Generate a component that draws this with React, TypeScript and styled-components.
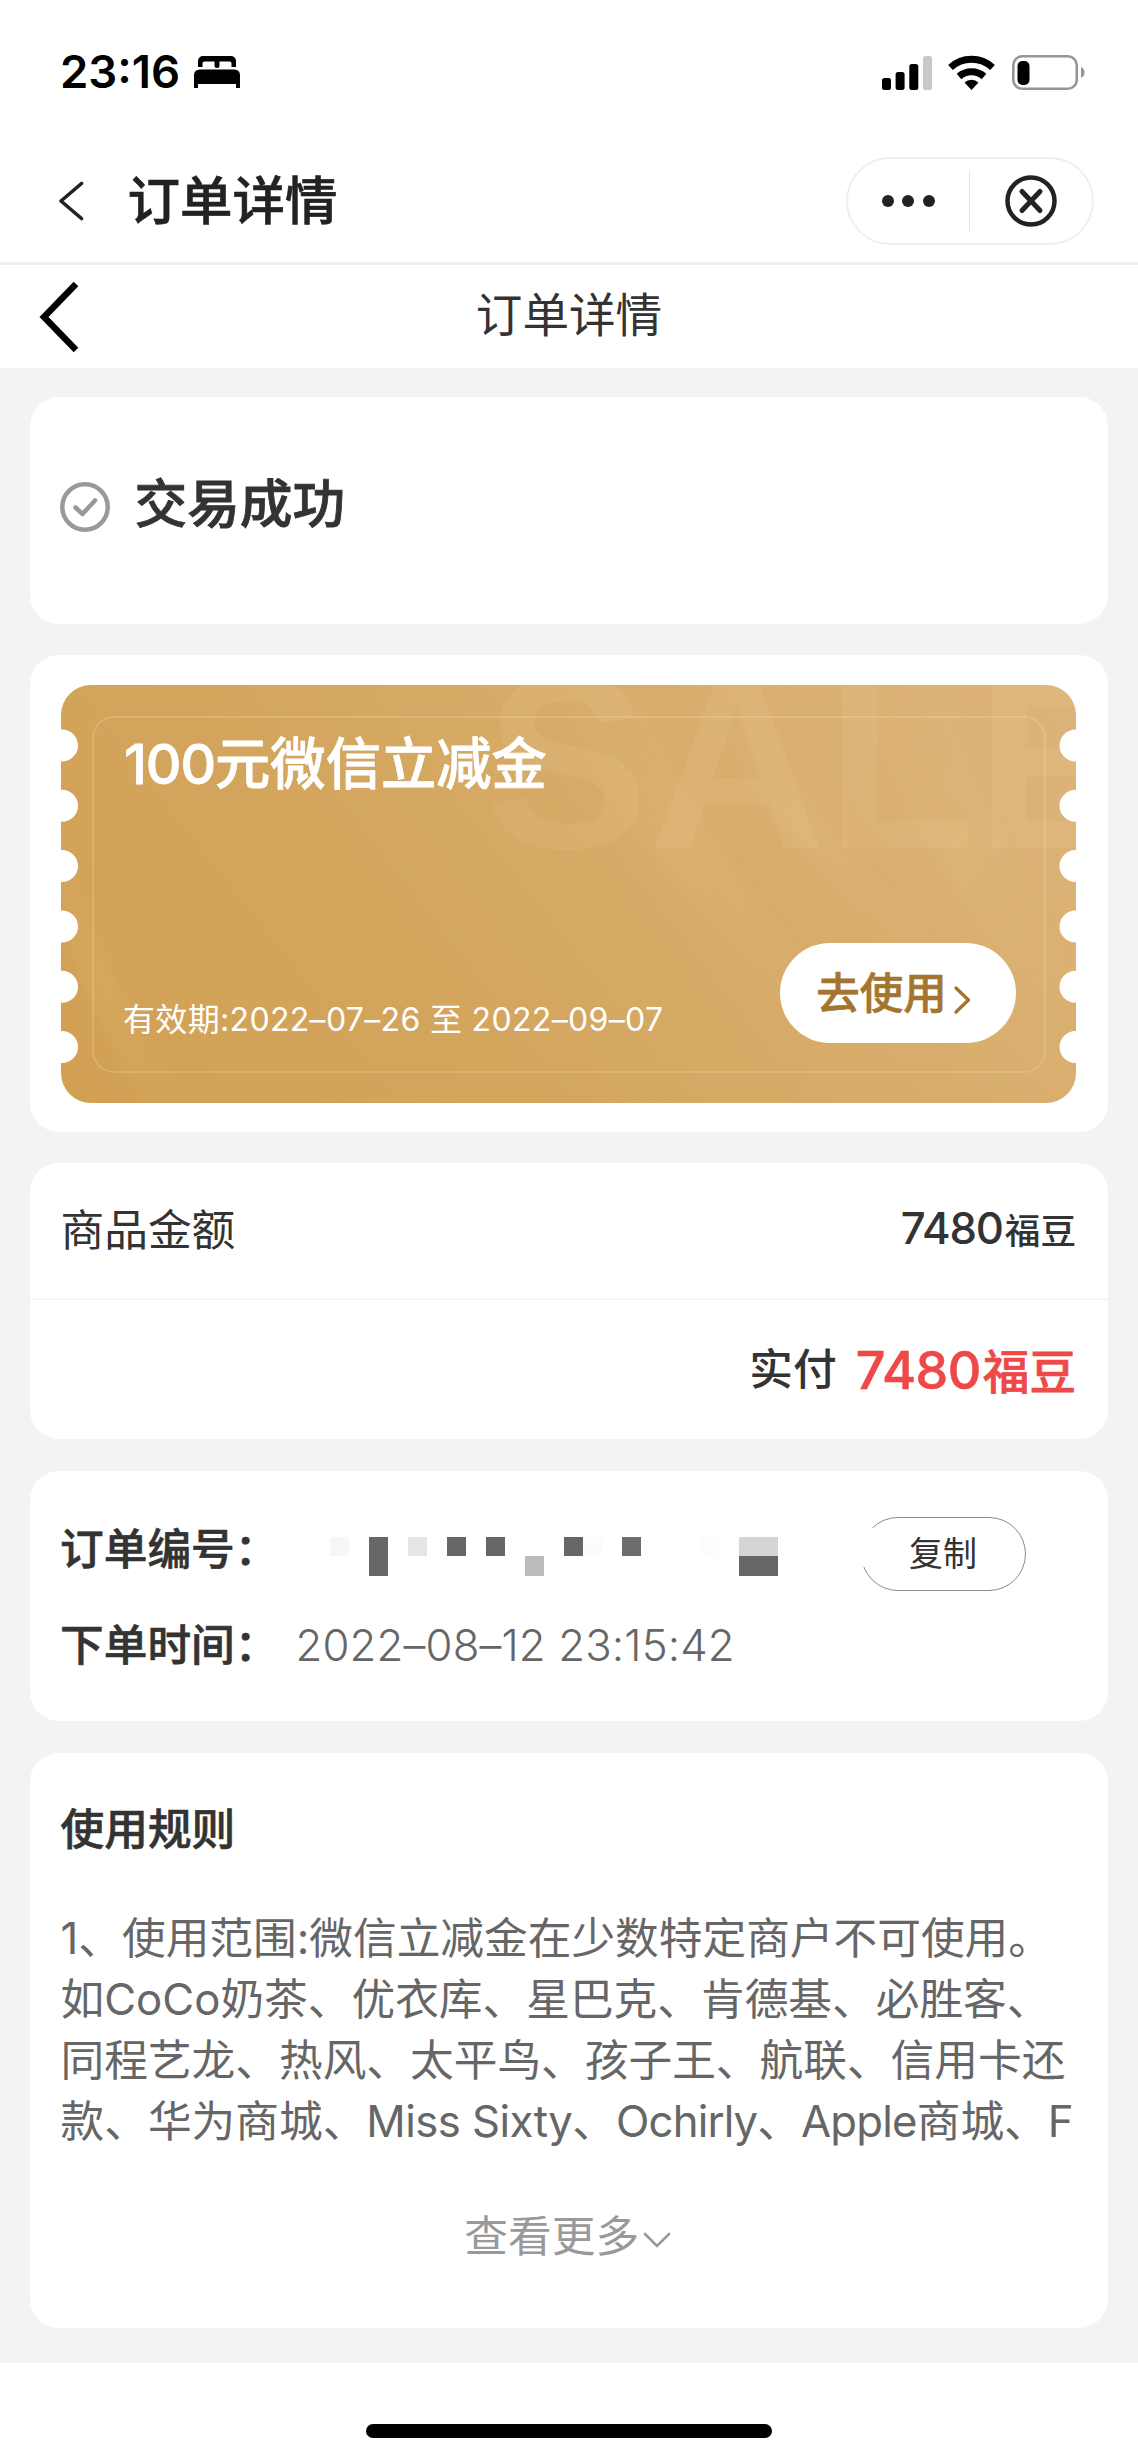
import React from "react";
import styled, { createGlobalStyle } from "styled-components";

const GlobalStyle = createGlobalStyle`
  * { box-sizing: border-box; }
  body {
    margin: 0;
    background: #fff;
    color: #333;
    font-family: Inter, "Noto Sans CJK SC", sans-serif;
    font-size: 43.7px;
  }
`;

const Page = styled.div`
  width: 1138px;
  height: 2462px;
  display: flex;
  flex-direction: column;
  overflow: hidden;
`;

const StatusBar = styled.header`
  height: 144px;
  padding: 0 53px 0 60px;
  display: flex;
  align-items: center;
  justify-content: space-between;
  color: #000;
`;

const StatusGroup = styled.div`
  display: flex;
  align-items: center;
`;

const Clock = styled.span`
  font-size: 45.5px;
  font-weight: 600;
  line-height: 60px;
  width: 134px;
`;

const NavBar = styled.nav`
  height: 121px;
  padding: 13px 44.5px 17px 58px;
  display: flex;
  align-items: center;
  border-bottom: 3px solid #eee;
`;

const NavTitle = styled.h1`
  margin: 0 0 0 42.5px;
  font-size: 52.5px;
  font-weight: 500;
  line-height: 70px;
  -webkit-text-stroke: 0.6px currentColor;
  color: #222;
  flex: 1;
`;

const Capsule = styled.div`
  width: 248px;
  height: 88px;
  border: 2px solid #efefef;
  border-radius: 44px;
  display: flex;
  align-items: center;
`;

const CapsuleButton = styled.div`
  flex: 1;
  display: flex;
  align-items: center;
  justify-content: center;
  gap: 8.5px;
`;

const CapsuleDivider = styled.i`
  width: 1px;
  height: 60px;
  background: #e2e2e2;
`;

const Dot = styled.i`
  width: 12px;
  height: 12px;
  border-radius: 50%;
  background: #222;
`;

const SubHeader = styled.div`
  height: 103px;
  padding: 0 38px;
  display: grid;
  grid-template-columns: 1fr auto 1fr;
  align-items: center;
`;

const SubTitle = styled.h2`
  margin: 0 0 3px;
  font-size: 46.6px;
  font-weight: 400;
  line-height: 60px;
`;

const Content = styled.main`
  height: 1995px;
  padding: 29px 30px 0;
  background: #f3f3f3;
  display: flex;
  flex-direction: column;
`;

const Card = styled.section<{ $h: number; $gap?: number }>`
  height: ${(p) => p.$h}px;
  margin-bottom: ${(p) => p.$gap ?? 31}px;
  flex: none;
  background: #fff;
  border-radius: 29px;
  overflow: hidden;
`;

const StatusCard = styled(Card)`
  display: flex;
  align-items: center;
  gap: 24.5px;
  padding: 0 30px 8px;
`;

const StatusText = styled.strong`
  font-size: 52.7px;
  font-weight: 500;
  line-height: 70px;
  margin-bottom: 5px;
  -webkit-text-stroke: 0.8px currentColor;
`;

const CouponCard = styled(Card)`
  padding: 30px 32px 0 31px;
`;

const Coupon = styled.div`
  position: relative;
  height: 418px;
  border-radius: 30px;
  overflow: hidden;
  color: #fff;
  background: linear-gradient(52deg, #d1a053 0%, #d3a55d 35%, #d8ad6b 65%, #dcb37a 100%);
`;

const CouponArt = styled.svg`
  position: absolute;
  inset: 0;
`;

const Watermark = styled.span`
  position: absolute;
  left: 424px;
  top: -62px;
  font: bold 245px/280px "Liberation Sans", Arial, sans-serif;
  color: rgba(255, 235, 190, 0.085);
  white-space: nowrap;
`;

const CouponFrame = styled.div`
  position: relative;
  height: 357px;
  margin: 31px 30px 30px 31px;
  padding: 11px 28px 28px 30px;
  border: 2px solid rgba(255, 235, 195, 0.2);
  border-radius: 22px;
  display: flex;
  flex-direction: column;
  justify-content: space-between;
`;

const CouponTitle = styled.h3`
  margin: 0;
  font-size: 55.3px;
  font-weight: 500;
  line-height: 70px;
  -webkit-text-stroke: 0.8px currentColor;
`;

const Latin = styled.span<{ $ls: number }>`
  letter-spacing: ${(p) => p.$ls}px;
`;

const CouponFooter = styled.div`
  display: flex;
  align-items: flex-end;
  justify-content: space-between;
`;

const Validity = styled.span`
  margin: 0 0 3px -1px;
  font-size: 32px;
  line-height: 40px;
  letter-spacing: 0.33px;
  white-space: pre;
`;

const UseButton = styled.button`
  width: 236px;
  height: 100px;
  padding: 0 9px 0 0;
  border: 0;
  border-radius: 50px;
  background: #fff;
  color: #a47530;
  font: 500 43.5px/60px Inter, "Noto Sans CJK SC", sans-serif;
  -webkit-text-stroke: 0.6px currentColor;
  display: flex;
  align-items: center;
  justify-content: center;
  gap: 6px;
`;

const ButtonChevron = styled.svg`
  margin-top: 14px;
`;

const Row = styled.div<{ $h: number; $line?: boolean }>`
  height: ${(p) => p.$h}px;
  padding: 0 32px 0 30.5px;
  display: flex;
  align-items: center;
  border-bottom: ${(p) => (p.$line ? "2px solid #f6f6f6" : "0")};
`;

const RowLabel = styled.span<{ $weight?: number; $push?: boolean }>`
  font-weight: ${(p) => p.$weight ?? 400};
  line-height: 60px;
  margin-left: ${(p) => (p.$push ? "auto" : "0")};
`;

const Price = styled.span`
  margin-left: auto;
  font-weight: 500;
  line-height: 60px;
`;

const Unit = styled.small`
  margin-left: 2px;
  font-size: 35.6px;
`;

const Total = styled.span`
  margin: 3px 0 0 19px;
  font-size: 52px;
  font-weight: 500;
  line-height: 64px;
  -webkit-text-stroke: 0.6px currentColor;
  color: #ee4848;
`;

const TotalUnit = styled.small`
  margin-left: 2px;
  font-size: 46.6px;
`;

const InfoCard = styled(Card)`
  padding-top: 30px;
`;

const InfoRow = styled.div<{ $h: number }>`
  height: ${(p) => p.$h}px;
  padding-left: 30px;
  display: flex;
  align-items: flex-start;
`;

const InfoLabel = styled.span<{ $w: number }>`
  width: ${(p) => p.$w}px;
  font-weight: 500;
  line-height: 97px;
  -webkit-text-stroke: 0.6px currentColor;
  white-space: nowrap;
`;

const InfoValue = styled.span`
  font-weight: 350;
  line-height: 97px;
  letter-spacing: 0.15px;
  color: #666;
`;

const Mosaic = styled.div`
  width: 447.6px;
  height: 39px;
  margin-top: 36px;
  display: grid;
  grid-template-columns: repeat(23, 1fr);
  grid-template-rows: 19px 20px;
`;

const MosaicCell = styled.i<{ $col: number; $row: number; $tone: string }>`
  grid-column: ${(p) => p.$col};
  grid-row: ${(p) => p.$row};
  background: ${(p) => p.$tone};
`;

const CopyButton = styled.div`
  position: relative;
  width: 165px;
  height: 74px;
  margin: 16px 0 0 83px;
  border: 1px solid #8c8c8c;
  border-radius: 37px;
  display: flex;
  align-items: center;
  justify-content: center;
  font-size: 34px;
  line-height: 50px;

  &::before {
    content: "";
    position: absolute;
    left: -5px;
    top: 10px;
    width: 16px;
    height: 39px;
    background: #fff;
  }
`;

const RulesCard = styled(Card)`
  padding: 47px 30px 0 30.5px;
`;

const RulesTitle = styled.h3`
  margin: 0 0 47.5px;
  font-size: 43.7px;
  font-weight: 500;
  line-height: 60px;
  -webkit-text-stroke: 0.6px currentColor;
`;

const RuleLine = styled.p`
  margin: 0;
  line-height: 61.2px;
  color: #666;
  white-space: nowrap;
`;

const More = styled.div`
  margin: 55px 3px 0 0;
  line-height: 60px;
  color: #999;
  display: flex;
  align-items: center;
  justify-content: center;
  gap: 4px;
`;

const MoreChevron = styled.svg`
  margin-top: 6px;
`;

const HomeArea = styled.footer`
  flex: 1;
  display: flex;
  justify-content: center;
  padding-top: 61px;
`;

const HomeBar = styled.div`
  width: 406px;
  height: 14px;
  border-radius: 7px;
  background: #000;
`;

const DARK = "#666";
const mosaic: [number, number, string][] = [
  [1, 1, "#f7f7f7"], [3, 1, DARK], [3, 2, DARK], [5, 1, "#e5e5e5"],
  [7, 1, DARK], [9, 1, DARK], [11, 2, "#bbb"], [13, 1, DARK],
  [14, 1, "#fcfcfc"], [16, 1, "#6d6d6d"], [20, 1, "#fdfdfd"],
  [22, 1, "#d5d5d5"], [23, 1, "#d5d5d5"], [22, 2, DARK], [23, 2, DARK],
];

const notches = [60.5, 120.8, 181, 241.5, 301.8, 362];

const BedIcon = () => (
  <svg width="46" height="32" viewBox="0 0 46 32">
    <path d="M4 11V5a5 5 0 0 1 5-5h28a5 5 0 0 1 5 5v6h-4.500V7.500a2 2 0 0 0-2-2H25.500V9.500a2 2 0 0 1-5 0V5.500H10.500a2 2 0 0 0-2 2V11z" />
    <path d="M0 32V19a5.500 5.500 0 0 1 5.500-5.500h35A5.500 5.500 0 0 1 46 19v13h-4v-4H4v4z" />
  </svg>
);

const StatusIcons = () => (
  <svg width="203" height="37" viewBox="0 0 203 37">
    <rect x="0" y="24" width="9" height="12" rx="2.500" />
    <rect x="13.600" y="18" width="9" height="18" rx="2.500" />
    <rect x="27.300" y="10" width="9" height="26" rx="2.500" />
    <rect x="41" y="2" width="9" height="34" rx="2.500" fill="#c8c8c8" />
    <g fill="none" stroke="#000" strokeWidth="7">
      <path d="M68.500 13.500a31 31 0 0 1 42 0" />
      <path d="M77 22.500a19 19 0 0 1 25 0" />
    </g>
    <path d="M89.500 36l-7-7.500a10.500 10.500 0 0 1 14 0z" />
    <rect x="131.300" y="2.300" width="63.500" height="32.500" rx="9" fill="none" stroke="#959595" strokeWidth="2.600" />
    <rect x="135.500" y="7" width="12" height="24" rx="5" />
    <path d="M199 13v11c2.200-1 3.600-3 3.600-5.500S201.200 14 199 13z" fill="#959595" />
  </svg>
);

export default function App() {
  return (
    <>
      <GlobalStyle />
      <Page>
        <StatusBar>
          <StatusGroup>
            <Clock>23:16</Clock>
            <BedIcon />
          </StatusGroup>
          <StatusIcons />
        </StatusBar>

        <NavBar>
          <svg width="27" height="40" viewBox="0 0 27 40" fill="none" stroke="#222" strokeWidth="3.600" strokeLinecap="round" strokeLinejoin="round">
            <path d="M23.500 2.500L3 20l20.500 17.500" />
          </svg>
          <NavTitle>订单详情</NavTitle>
          <Capsule>
            <CapsuleButton><Dot /><Dot /><Dot /></CapsuleButton>
            <CapsuleDivider />
            <CapsuleButton>
              <svg width="52" height="52" viewBox="0 0 52 52" fill="none" stroke="#222" strokeLinecap="round">
                <circle cx="26" cy="26" r="23.500" strokeWidth="4.500" />
                <path d="M17 16.500l18 19M35 16.500l-18 19" strokeWidth="5" />
              </svg>
            </CapsuleButton>
          </Capsule>
        </NavBar>

        <SubHeader>
          <svg width="42" height="76" viewBox="0 0 42 76" fill="none" stroke="#000" strokeWidth="6.500">
            <path d="M38 5L6 38l32 33" />
          </svg>
          <SubTitle>订单详情</SubTitle>
        </SubHeader>

        <Content>
          <StatusCard $h={227}>
            <svg width="50" height="50" viewBox="0 0 50 50" fill="none" stroke="#999" strokeLinecap="round" strokeLinejoin="round">
              <circle cx="25" cy="25" r="22.700" strokeWidth="4.500" />
              <path d="M15.500 25.500l7 6.500L35 18.500" strokeWidth="4.500" />
            </svg>
            <StatusText>交易成功</StatusText>
          </StatusCard>

          <CouponCard $h={477}>
            <Coupon>
              <CouponArt width="1015" height="418" viewBox="0 0 1015 418">
                <defs>
                  <linearGradient id="ray" x1="0" y1="0" x2="1" y2="1">
                    <stop offset="0" stopColor="#f3d59c" stopOpacity="0" />
                    <stop offset="0.5" stopColor="#f3d59c" stopOpacity="0.1" />
                    <stop offset="1" stopColor="#f3d59c" stopOpacity="0" />
                  </linearGradient>
                  <filter id="soft" x="-10%" y="-10%" width="120%" height="120%">
                    <feGaussianBlur stdDeviation="5" />
                  </filter>
                </defs>
                <g fill="url(#ray)" filter="url(#soft)">
                  <path d="M0 100Q30 290 130 418H85Q15 300 0 240z" />
                  <path d="M490 0Q570 190 745 320L770 300Q640 170 580 0z" />
                  <path d="M640 0Q710 160 840 255L880 255Q740 140 700 0z" />
                  <path d="M790 0Q860 200 1015 350V290Q920 140 890 0z" />
                </g>
              </CouponArt>
              <Watermark>SALE</Watermark>
              <CouponFrame>
                <CouponTitle><Latin $ls={-1.1}>100</Latin>元微信立减金</CouponTitle>
                <CouponFooter>
                  <Validity>有效期:2022–07–26 至 2022–09–07</Validity>
                  <UseButton>
                    去使用
                    <ButtonChevron width="18" height="30" viewBox="0 0 18 30" fill="none" stroke="#a47530" strokeWidth="3.400" strokeLinecap="round" strokeLinejoin="round">
                      <path d="M3 3l12.500 12L3 27" />
                    </ButtonChevron>
                  </UseButton>
                </CouponFooter>
              </CouponFrame>
              <CouponArt width="1015" height="418" viewBox="0 0 1015 418" fill="#fff">
                {notches.map((y) => (
                  <React.Fragment key={y}>
                    <circle cx="1" cy={y} r="16" />
                    <circle cx="1014.500" cy={y} r="16" />
                  </React.Fragment>
                ))}
              </CouponArt>
            </Coupon>
          </CouponCard>

          <Card $h={276} $gap={32}>
            <Row $h={137} $line>
              <RowLabel>商品金额</RowLabel>
              <Price><Latin $ls={-1.2}>7480</Latin><Unit>福豆</Unit></Price>
            </Row>
            <Row $h={139}>
              <RowLabel $weight={500} $push>实付</RowLabel>
              <Total><Latin $ls={-0.5}>7480</Latin><TotalUnit>福豆</TotalUnit></Total>
            </Row>
          </Card>

          <InfoCard $h={250} $gap={32}>
            <InfoRow $h={96}>
              <InfoLabel $w={270}>订单编号：</InfoLabel>
              <Mosaic>
                {mosaic.map(([col, row, tone]) => (
                  <MosaicCell key={`${col}-${row}`} $col={col} $row={row} $tone={tone} />
                ))}
              </Mosaic>
              <CopyButton>复制</CopyButton>
            </InfoRow>
            <InfoRow $h={96}>
              <InfoLabel $w={235.5}>下单时间：</InfoLabel>
              <InfoValue>2022–08–12 23:15:42</InfoValue>
            </InfoRow>
          </InfoCard>

          <RulesCard $h={575}>
            <RulesTitle>使用规则</RulesTitle>
            <RuleLine>1、使用范围:微信立减金在少数特定商户不可使用。</RuleLine>
            <RuleLine>如CoCo奶茶、优衣库、星巴克、肯德基、必胜客、</RuleLine>
            <RuleLine>同程艺龙、热风、太平鸟、孩子王、航联、信用卡还</RuleLine>
            <RuleLine>
              款、华为商城、<Latin $ls={-0.55}>Miss Sixty</Latin>、
              <Latin $ls={-0.85}>Ochirly</Latin>、<Latin $ls={-0.8}>Apple</Latin>商城、F
            </RuleLine>
            <More>
              查看更多
              <MoreChevron width="28" height="18" viewBox="0 0 28 18" fill="none" stroke="#999" strokeWidth="2.600" strokeLinecap="round">
                <path d="M2 3l12 12L26 3" />
              </MoreChevron>
            </More>
          </RulesCard>
        </Content>

        <HomeArea>
          <HomeBar />
        </HomeArea>
      </Page>
    </>
  );
}
